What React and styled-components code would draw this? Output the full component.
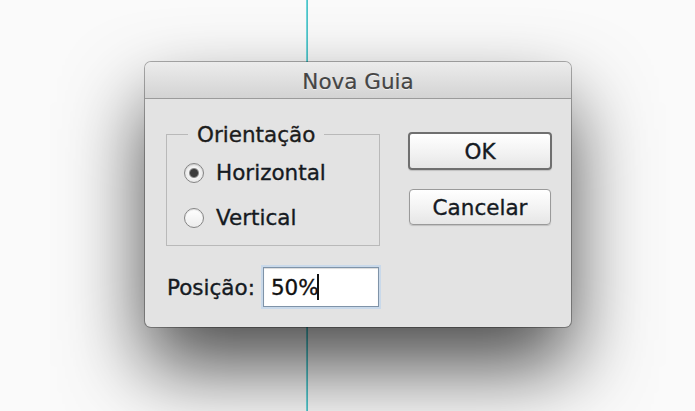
import React from 'react';
import styled, { createGlobalStyle } from 'styled-components';

const GlobalStyle = createGlobalStyle`
  html, body {
    margin: 0;
    padding: 0;
    background: #fafafa;
  }
  body {
    font-family: 'DejaVu Sans', 'Liberation Sans', sans-serif;
    -webkit-text-stroke: 0.35px currentColor;
  }
`;

const Canvas = styled.div`
  position: relative;
  width: 695px;
  height: 411px;
  overflow: hidden;
  background: #fafafa;
  padding: 62px 0 0 145px;
  box-sizing: border-box;
`;

// the ruler guide sits on the canvas, under the dialog
const Guide = styled.div`
  position: absolute;
  top: 0;
  bottom: 0;
  left: 306px;
  width: 2px;
  background: linear-gradient(to right, #7fe0e4, #3fb8be);
`;

const Dialog = styled.div`
  position: relative;
  width: 426px;
  border-radius: 6px;
  background: #e3e3e3;
  box-shadow: 0 0 0 1px rgba(0, 0, 0, 0.3), 0 40px 80px rgba(0, 0, 0, 0.7);
  overflow: hidden;
`;

const TitleBar = styled.div`
  height: 37px;
  box-sizing: border-box;
  padding-top: 3px;
  display: flex;
  align-items: center;
  justify-content: center;
  background: linear-gradient(#ececec, #d3d3d3);
  border-bottom: 1px solid #9b9b9b;
  font-size: 21.5px;
  color: #454545;
  text-shadow: 0 1px 0 rgba(255, 255, 255, 0.6);
  -webkit-text-stroke: 0.2px currentColor;
`;

const Body = styled.div`
  display: grid;
  grid-template-columns: 214px 1fr;
  column-gap: 28px;
  padding: 23px 19px 20px 21px;
`;

const LeftColumn = styled.div`
  display: flex;
  flex-direction: column;
  gap: 21px;
`;

const RightColumn = styled.div`
  display: flex;
  flex-direction: column;
  align-items: flex-start;
  gap: 19px;
  padding-top: 10px;
`;

const Group = styled.fieldset`
  margin: 0;
  padding: 13px 0 0 17px;
  border: 1px solid #b9b9b9;
  height: 124px;
  box-sizing: border-box;
  display: flex;
  flex-direction: column;
  gap: 19px;
`;

const Legend = styled.legend`
  margin-left: 4px;
  padding: 0 9px;
  font-size: 21.5px;
  line-height: 25px;
  color: #1c1c1c;
`;

const RadioRow = styled.label`
  display: flex;
  align-items: center;
  gap: 12px;
  font-size: 21.5px;
  line-height: 26px;
  color: #151a22;
`;

const RadioDot = styled.span`
  width: 20px;
  height: 20px;
  border-radius: 50%;
  box-sizing: border-box;
  border: 1px solid #858585;
  background: ${p => (p.$checked
    ? 'radial-gradient(circle, #3c3c3c 0 3.5px, #8a8a8a 4.5px, #f4f4f4 5.5px, #dcdcdc 100%)'
    : 'linear-gradient(#ffffff, #ececec)')};
  box-shadow: inset 0 1px 1px rgba(0, 0, 0, 0.12);
`;

const FieldRow = styled.div`
  display: flex;
  align-items: center;
  gap: 8px;
  padding-left: 1px;
`;

const Label = styled.span`
  font-size: 21.5px;
  color: #151a22;
`;

const Input = styled.div`
  width: 116px;
  height: 40px;
  box-sizing: border-box;
  display: flex;
  align-items: center;
  padding-left: 7px;
  background: #fff;
  border: 1px solid #7f93a8;
  box-shadow: 0 0 0 2px #c9d9ea, inset 0 1px 1px rgba(0, 0, 0, 0.15);
  font-size: 21.5px;
  color: #111;
`;

const Caret = styled.span`
  display: inline-block;
  width: 0;
  height: 26px;
  border-left: 2px solid #111;
  margin-left: -2px;
`;

const Button = styled.button`
  font-family: inherit;
  font-size: 21.5px;
  color: #151a22;
  width: ${p => (p.$primary ? '144px' : '142px')};
  height: ${p => (p.$primary ? '38px' : '36px')};
  margin-left: ${p => (p.$primary ? '0' : '1px')};
  border-radius: 4px;
  border: ${p => (p.$primary ? '2px solid #6f6f6f' : '1px solid #9a9a9a')};
  background: linear-gradient(#ffffff, #f1f1f1 60%, #e6e6e6);
  box-shadow: 0 1px 1px rgba(0, 0, 0, 0.15);
  padding: 0;
  display: flex;
  align-items: center;
  justify-content: center;
`;

const App = () => (
  <>
    <GlobalStyle />
    <Canvas>
      <Guide />
      <Dialog>
        <TitleBar>Nova Guia</TitleBar>
        <Body>
          <LeftColumn>
            <Group>
              <Legend>Orientação</Legend>
              <RadioRow>
                <RadioDot $checked />
                Horizontal
              </RadioRow>
              <RadioRow>
                <RadioDot />
                Vertical
              </RadioRow>
            </Group>
            <FieldRow>
              <Label>Posição:</Label>
              <Input>
                50%
                <Caret />
              </Input>
            </FieldRow>
          </LeftColumn>
          <RightColumn>
            <Button $primary>OK</Button>
            <Button>Cancelar</Button>
          </RightColumn>
        </Body>
      </Dialog>
    </Canvas>
  </>
);

export default App;
